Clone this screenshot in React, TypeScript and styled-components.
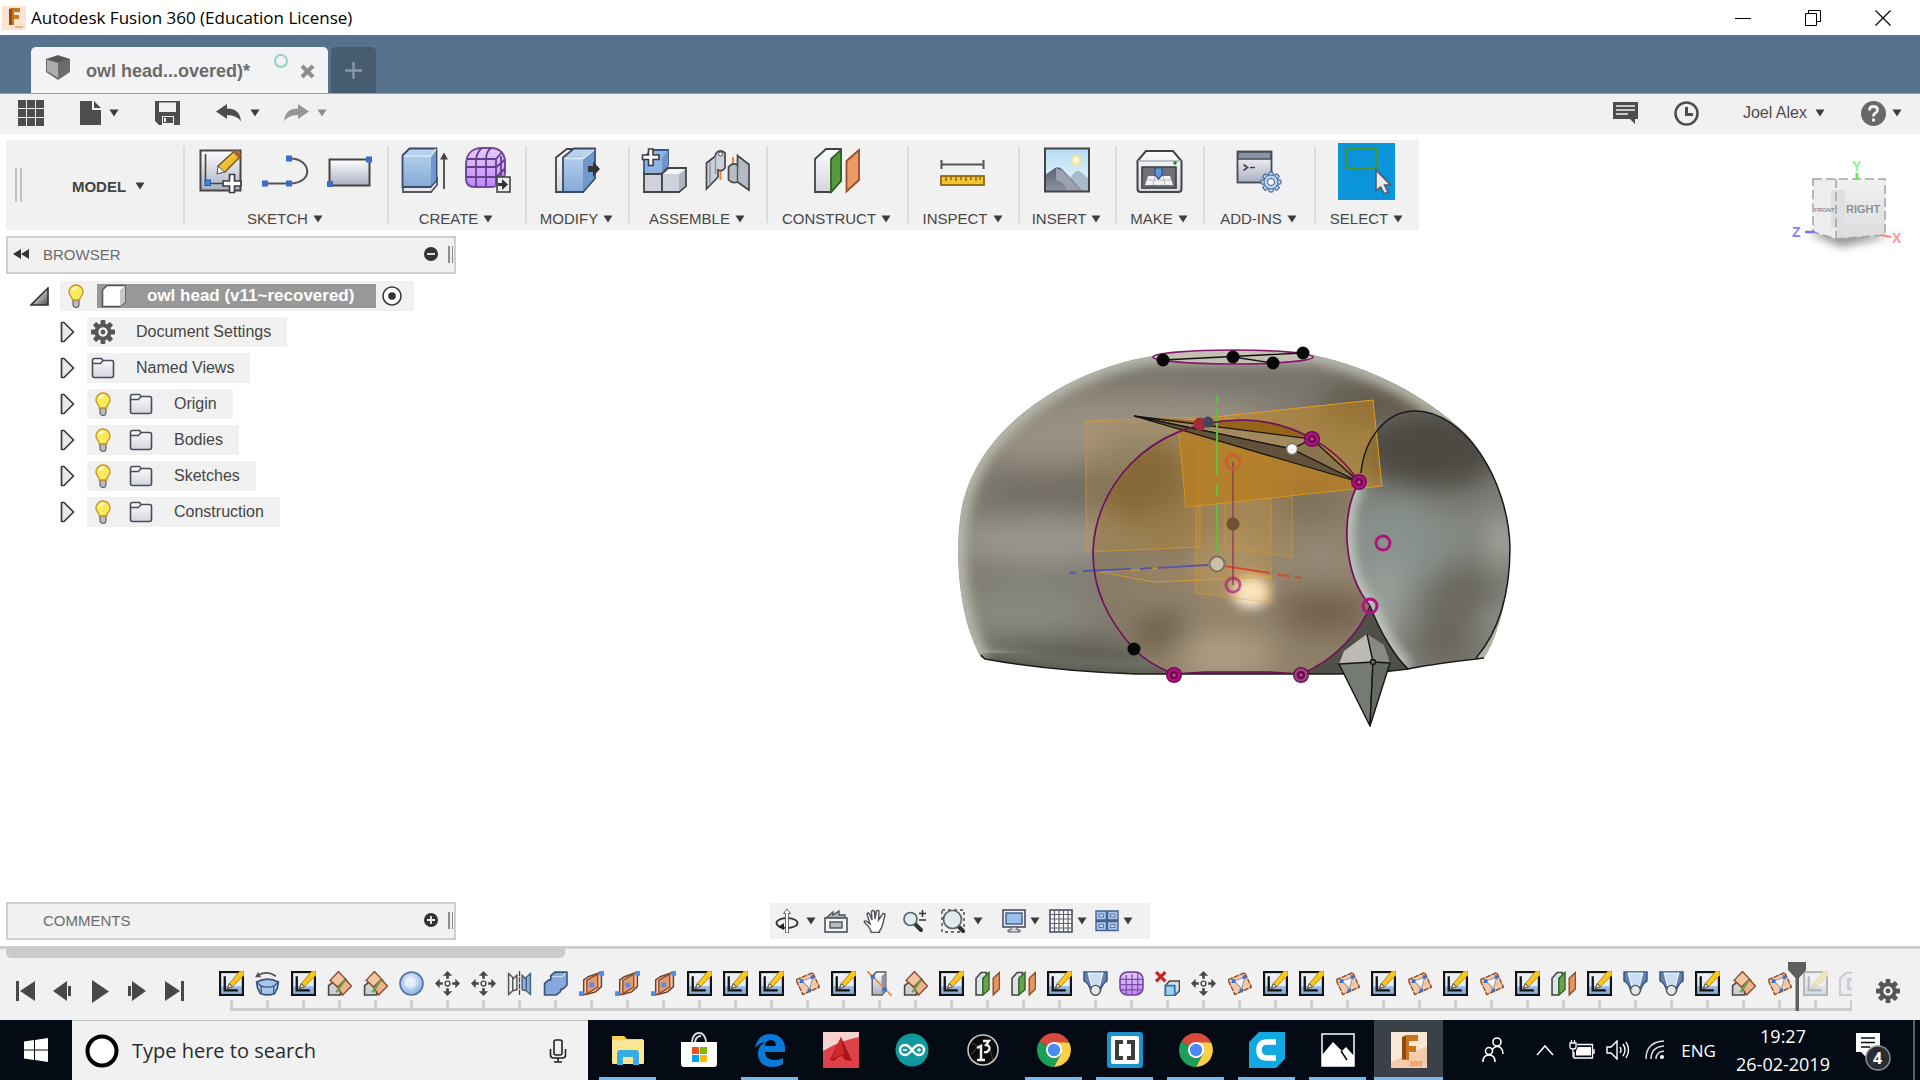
import React from "react";
import styled, { createGlobalStyle } from "styled-components";

const Global = createGlobalStyle`
  *, *::before, *::after { box-sizing: border-box; }
  html, body { margin: 0; padding: 0; }
  body { background: #fff; font-family: "Liberation Sans", Arial, sans-serif; color: #444; }
  button { border: 0; padding: 0; margin: 0; background: none; color: inherit; font: inherit; cursor: pointer; }
  ul { list-style: none; margin: 0; padding: 0; }
  svg { display: block; flex: none; }
`;

const uiFont = `"Open Sans", "Noto Sans", sans-serif`;

const Page = styled.div`
  display: flex;
  flex-direction: column;
  min-height: 100vh;
`;

/* ---------- window title ---------- */
const TitleBar = styled.header`
  display: flex;
  align-items: center;
  height: 35px;
  padding: 0 2px;
  font-family: ${uiFont};
  font-size: 17px;
  color: #000;
`;
const TitleText = styled.span`
  margin-left: 5px;
  flex: 1;
`;
const WindowButton = styled.button`
  width: 70px;
  height: 35px;
  display: grid;
  place-items: center;
`;

const TabStrip = styled.nav`
  display: flex;
  align-items: flex-end;
  gap: 3px;
  height: 59px;
  padding-left: 31px;
  background: #56728c;
  border-bottom: 1px solid #8fa1b2;
`;
const DocTab = styled.div`
  display: flex;
  align-items: center;
  width: 297px;
  height: 46px;
  padding: 2px 13px 0 14px;
  border-radius: 5px 5px 0 0;
  background: #f3f3f5;
  color: #6b6b6b;
  font-size: 18px;
  font-weight: bold;
`;
const PartIcon = styled.svg`
  margin-bottom: 6px;
`;
const TabName = styled.span`
  margin-left: 15px;
  flex: 1;
`;
const SyncRing = styled.span`
  width: 14px;
  height: 14px;
  margin: 0 12px 20px 0;
  border: 2px solid #8fd6c6;
  border-radius: 50%;
`;
const NewTab = styled.button`
  display: grid;
  place-items: center;
  width: 45px;
  height: 46px;
  border-radius: 5px 5px 0 0;
  background: #475b71;
`;

/* ---------- quick access ---------- */
const QuickBar = styled.div`
  display: flex;
  align-items: center;
  justify-content: space-between;
  height: 40px;
  padding: 0 18px 2px;
  background: #f1f1f1;
  color: #4c4c4c;
`;
const QuickGroup = styled.div<{ $gap: number }>`
  display: flex;
  align-items: center;
  gap: ${(p) => p.$gap}px;
`;
const QuickButton = styled.button<{ $faded?: boolean }>`
  display: flex;
  align-items: center;
  gap: 8px;
  font-size: 16px;
  opacity: ${(p) => (p.$faded ? 0.55 : 1)};
`;
const AccountButton = styled(QuickButton)`
  padding-left: 8px;
`;
const HelpButton = styled(QuickButton)`
  gap: 6px;
`;

/* ---------- ribbon ---------- */
const Viewport = styled.main`
  position: relative;
  flex: 1;
  display: flex;
  flex-direction: column;
  padding: 6px 0 6px 6px;
`;
const Ribbon = styled.div`
  display: flex;
  align-self: flex-start;
  height: 90px;
  background: #f1f1f1;
`;
const Grip = styled.span`
  align-self: center;
  width: 7px;
  height: 34px;
  margin-left: 9px;
  border: solid #c4c4c4;
  border-width: 0 2px;
`;
const ModelButton = styled.button`
  width: 161px;
  padding: 2px 0 0 12px;
  display: flex;
  align-items: center;
  justify-content: center;
  gap: 9px;
  font-size: 15px;
  font-weight: bold;
  color: #444;
`;
const RibbonGroup = styled.section<{ $w: number }>`
  display: flex;
  flex-direction: column;
  align-items: center;
  width: ${(p) => p.$w}px;
  padding-top: 3px;
  background: linear-gradient(#dcdcdc, #dcdcdc) 0 6px / 2px 77px no-repeat;
`;
const Tools = styled.div`
  display: flex;
  height: 57px;
`;
const Tool = styled.button<{ $active?: boolean }>`
  display: grid;
  place-items: center;
  width: ${(p) => (p.$active ? 57 : 64)}px;
  padding-bottom: 3px;
  background: ${(p) => (p.$active ? "#0a95db" : "transparent")};
`;
const GroupLabel = styled.button`
  display: flex;
  align-items: center;
  gap: 5px;
  margin-top: 8px;
  font-size: 15px;
  line-height: 22px;
  color: #474747;
`;
const CubeSlot = styled.div`
  position: absolute;
  top: 21px;
  right: 16px;
`;

/* ---------- browser panel ---------- */
const Workspace = styled.div`
  flex: 1;
  display: flex;
  padding-top: 6px;
`;
const SideColumn = styled.aside`
  display: flex;
  flex-direction: column;
  width: 450px;
`;
const PanelHead = styled.div`
  display: flex;
  align-items: center;
  height: 38px;
  padding: 0 1px 2px 5px;
  border: 2px solid #cfcfcf;
  background: #f1f1f1;
  font-size: 15px;
  color: #6c6c6c;
`;
const PanelTitle = styled.span`
  flex: 1;
  margin-left: 14px;
`;
const CollapseButton = styled.button`
  width: 16px;
  height: 12px;
`;
const SlimGrip = styled.span`
  width: 5px;
  height: 17px;
  margin-left: 10px;
  border: solid #8c8c8c;
  border-width: 0 1px 0 2px;
`;
const Tree = styled.ul`
  display: flex;
  flex-direction: column;
  gap: 6px;
  padding: 7px 0 0 24px;
  font-size: 16px;
  color: #454545;
`;
const Row = styled.li<{ $child?: boolean }>`
  display: flex;
  align-items: center;
  gap: ${(p) => (p.$child ? 12 : 11)}px;
  height: 30px;
  padding-left: ${(p) => (p.$child ? 30 : 0)}px;
`;
const RowBody = styled.div`
  display: flex;
  align-items: center;
  height: 30px;
  padding: 0 16px 0 4px;
  background: #f1f1f1;
`;
const RootBody = styled(RowBody)`
  padding: 0 12px 0 7px;
`;
const RowName = styled.span`
  margin-left: 21px;
`;
const RootName = styled.span`
  display: flex;
  align-items: center;
  height: 24px;
  margin: 0 6px 0 12px;
  padding: 0 22px 0 4px;
  gap: 20px;
  background: #989898;
  color: #fff;
  font-size: 17px;
  font-weight: bold;
`;
const BulbSlot = styled.span`
  margin: 0 17px 0 3px;
`;
const Spacer = styled.div`
  flex: 1;
`;
const Scene = styled.div`
  flex: 1;
  display: flex;
  justify-content: center;
  align-items: flex-start;
  padding-top: 94px;
`;
const NavBar = styled.div`
  position: absolute;
  left: 50%;
  bottom: 7px;
  transform: translateX(-50%);
  display: flex;
  align-items: center;
  width: 380px;
  height: 36px;
  padding-left: 5px;
  background: #f1f1f1;
`;
const NavButton = styled.button<{ $w: number; $gap: number }>`
  display: flex;
  align-items: center;
  gap: ${(p) => p.$gap}px;
  width: ${(p) => p.$w}px;
`;

/* ---------- timeline ---------- */
const Timeline = styled.section`
  border-top: 3px solid #cecece;
  background: #f1f1f1;
`;
const ScrollThumb = styled.div`
  width: 559px;
  height: 9px;
  margin-left: 6px;
  border-radius: 0 0 5px 5px;
  background: #cbcbcb;
`;
const TimelineBody = styled.div`
  display: flex;
  height: 62px;
`;
const Playback = styled.div`
  display: flex;
  align-items: center;
  width: 206px;
  margin-left: 7px;
  padding-top: 4px;
`;
const PlayButton = styled.button`
  display: grid;
  place-items: center;
  width: 37px;
`;
const Track = styled.div`
  flex: 1;
  min-width: 0;
  padding-top: 13px;
  overflow: hidden;
`;
const Cells = styled.ul`
  display: flex;
`;
const Cell = styled.li<{ $faded?: boolean }>`
  position: relative;
  flex: none;
  display: flex;
  flex-direction: column;
  align-items: center;
  justify-content: space-between;
  width: 36px;
  height: 37px;
  > svg:first-child { opacity: ${(p) => (p.$faded ? 0.25 : 1)}; }
  &::after { content: ""; width: 3px; height: 8px; background: #cecece; }
`;
const Marker = styled.svg`
  position: absolute;
  top: -9px;
  left: -9px;
  z-index: 1;
`;
const Rail = styled.div`
  height: 3px;
  margin-left: 17px;
  background: #cecece;
`;
const GearButton = styled.button`
  display: grid;
  place-items: center;
  width: 68px;
  padding: 4px 0 0 4px;
`;

/* ---------- taskbar ---------- */
const Taskbar = styled.footer`
  display: flex;
  height: 60px;
  background: #050b14;
  color: #fff;
  font-family: ${uiFont};
`;
const Start = styled.button`
  display: grid;
  place-items: center;
  width: 72px;
`;
const SearchBox = styled.label`
  display: flex;
  align-items: center;
  width: 516px;
  padding: 0 21px 0 13px;
  border-top: 1px solid #bdbdbd;
  background: #f1f1f1;
`;
const SearchInput = styled.input`
  flex: 1;
  min-width: 0;
  margin-left: 13px;
  padding: 0;
  border: 0;
  outline: 0;
  background: none;
  font-family: ${uiFont};
  font-size: 20px;
  &::placeholder { color: #2b2b2b; opacity: 1; }
`;
const Apps = styled.div`
  display: flex;
  gap: 2px;
  margin-left: 5px;
`;
const AppButton = styled.button<{ $run?: boolean; $on?: boolean }>`
  display: grid;
  place-items: center;
  width: 69px;
  background: ${(p) => (p.$on ? "#3b4149" : "transparent")};
  &::after {
    content: "";
    align-self: end;
    grid-area: 1 / 1;
    width: ${(p) => (p.$on ? 69 : 57)}px;
    height: 3px;
    background: ${(p) => (p.$run ? "#76b9ed" : "transparent")};
  }
  > svg { grid-area: 1 / 1; }
`;
const Tray = styled.div`
  display: flex;
  align-items: center;
  margin-left: auto;
  padding-right: 5px;
  font-size: 17px;
`;
const TrayButton = styled.button<{ $w: number }>`
  display: grid;
  place-items: center;
  width: ${(p) => p.$w}px;
  height: 60px;
`;
const Clock = styled.button`
  width: 120px;
  font-size: 18px;
  line-height: 28px;
  text-align: center;
`;
const Desktop = styled.button`
  width: 2px;
  height: 60px;
  margin-left: 10px;
  background: #5a5f66;
`;
const Badge = styled.text`
  font: bold 16px ${uiFont};
`;

/* ---------- shared drawings ---------- */
const Caret = () => (
  <svg width="10" height="8" viewBox="0 0 10 8"><path d="M0.5 0.5h9L5 7.5z" fill="#3d3d3d" /></svg>
);

const Gear = ({ size, fill = "#565656", hole = "#f1f1f1" }: { size: number; fill?: string; hole?: string }) => (
  <svg width={size} height={size} viewBox="-12 -12 24 24">
    {[0, 45, 90, 135, 180, 225, 270, 315].map((a) => (
      <rect key={a} x="-2.4" y="-12" width="4.8" height="6" rx="1" fill={fill} transform={`rotate(${a})`} />
    ))}
    <circle r="6.5" fill="none" stroke={fill} strokeWidth="4" />
    <circle r="4.5" fill={hole} />
    <circle r="2.4" fill={fill} />
  </svg>
);

const Bulb = () => (
  <svg width="18" height="24" viewBox="0 0 18 24">
    <path d="M6 16h6v4.500a3 3 0 0 1-6 0z" fill="#b9bcc4" stroke="#63656d" strokeWidth="1.200" />
    <path d="M9 1a7 7 0 0 1 7 7c0 3.500-3 4.500-3.500 8h-7C5 12.500 2 11.500 2 8a7 7 0 0 1 7-7z" fill="#fdea5a" stroke="#c2952f" strokeWidth="1.400" />
    <path d="M6 6a3.500 3.500 0 0 1 3-2.500" stroke="#fffce0" strokeWidth="2" fill="none" strokeLinecap="round" />
  </svg>
);

const Folder = () => (
  <svg width="24" height="22" viewBox="0 0 24 22">
    <path d="M1.500 3.500q0-2 2-2h7l1.500 2h8.500q2 0 2 2v13q0 2-2 2h-17q-2 0-2-2z" fill="url(#steel)" stroke="#494d58" strokeWidth="1.600" />
    <path d="M1.500 6.500h8l2.500-3" fill="none" stroke="#494d58" strokeWidth="1.400" />
  </svg>
);

const Expander = () => (
  <svg width="15" height="22" viewBox="0 0 15 22"><path d="M1.500 1.500h2.500L13.500 11 4 20.500H1.500z" fill="#e8e8ec" stroke="#3d3d3d" strokeWidth="1.700" strokeLinejoin="round" /></svg>
);

const GradientSheet = styled.svg`
  position: absolute;
`;
const Defs = () => (
  <GradientSheet width="0" height="0" aria-hidden="true">
    <defs>
      <linearGradient id="steel" x1="0" y1="0" x2="0" y2="1"><stop offset="0" stopColor="#fdfdfe" /><stop offset="1" stopColor="#d3d6de" /></linearGradient>
      <linearGradient id="steelDark" x1="0" y1="0" x2="0" y2="1"><stop offset="0" stopColor="#fff" /><stop offset="1" stopColor="#a9b0c0" /></linearGradient>
      <linearGradient id="blue" x1="0" y1="0" x2="0" y2="1"><stop offset="0" stopColor="#bcd6ee" /><stop offset="1" stopColor="#84aad8" /></linearGradient>
      <linearGradient id="violet" x1="0" y1="0" x2="0" y2="1"><stop offset="0" stopColor="#e6cdf6" /><stop offset="1" stopColor="#bf85fb" /></linearGradient>
      <linearGradient id="sky" x1="0" y1="0" x2="0" y2="1"><stop offset="0" stopColor="#b5dcf6" /><stop offset="1" stopColor="#eff9fd" /></linearGradient>
      <linearGradient id="rock" x1="0" y1="0" x2="0" y2="1"><stop offset="0" stopColor="#5a6070" /><stop offset="1" stopColor="#8d94a4" /></linearGradient>
      <linearGradient id="pencil" x1="0" y1="0" x2="1" y2="1"><stop offset="0" stopColor="#ffe45c" /><stop offset="1" stopColor="#d99a0b" /></linearGradient>
      <linearGradient id="corner" x1="0" y1="0" x2="1" y2="1"><stop offset="0.3" stopColor="#e2e2e2" /><stop offset="1" stopColor="#4c4c4c" /></linearGradient>
      <radialGradient id="ball" cx="0.45" cy="0.4" r="0.6"><stop offset="0" stopColor="#fff" /><stop offset="1" stopColor="#86aee0" /></radialGradient>
    </defs>
  </GradientSheet>
);

/* ribbon tool drawings, 48 by 48 */
const toolArt: Record<string, React.ReactNode> = {
  sketch: (<>
    <path d="M3.500 4.500h40v40h-40z" fill="url(#steelDark)" stroke="#474747" strokeWidth="2" />
    <path d="M8.500 8v29.500H36" fill="none" stroke="#444" strokeWidth="1.600" />
    <rect x="8" y="34" width="5.500" height="5.500" fill="#3f86e0" stroke="#2458a8" />
    <path d="M21 20L37.500 5l6 5.500L28 26l-7.500 1.500z" fill="url(#pencil)" stroke="#6b4d16" strokeWidth="1.300" />
    <path d="M21 20l6.500 6-7.500 2z" fill="#fff" stroke="#555" />
    <path d="M36 6.500l5.500 5.500 3-3-5-5.500z" fill="#a4643a" />
    <path d="M32.500 28.500h5v6.500h6.500v5h-6.500v6.500h-5V40H26v-5h6.500z" fill="#fff" stroke="#3f3f3f" strokeWidth="1.700" />
  </>),
  arc: (<>
    <path d="M4 37.500h25c24 0 22-25 0-25" fill="none" stroke="#555" strokeWidth="2" />
    <path d="M1 34.500h6v6H1zM25 34.500h6v6h-6zM25 9.500h6v6h-6z" fill="#396bcb" />
  </>),
  rect: (<>
    <rect x="4.500" y="13.500" width="40" height="26" fill="url(#steelDark)" stroke="#444" strokeWidth="2" />
    <path d="M41 10.500h6v6h-6zM2 35h6v6H2z" fill="#396bcb" />
  </>),
  extrude: (<>
    <path d="M3 40v6h28l6-7v-7z" fill="#e6e8ee" stroke="#55585f" strokeWidth="1.800" />
    <path d="M2.500 9.500l7-7h27v32l-6 6.500h-28z" fill="url(#blue)" stroke="#3a4a68" strokeWidth="1.800" />
    <path d="M31 10l5-7v31l-5 6z" fill="#6e98cf" /><path d="M4 10h27l5-7" fill="none" stroke="#dcecfa" strokeWidth="1.400" />
    <path d="M44 43V12" stroke="#444" strokeWidth="1.800" /><path d="M40 13.500l4-7 4 7z" fill="#444" />
  </>),
  form: (<>
    <path d="M2 19C2 8 8 2 18 2h9c9 0 14 6 14 14v11q0 4-6 11-2 3-9 3H11q-9 0-9-8z" fill="url(#violet)" stroke="#7548a0" strokeWidth="2" />
    <path d="M12 13v28M22 13v28M32 13v26M2.500 21h30l8-7M2.500 31h30l8-8M3 13h29l6-7M12 13q1-7 6-11M22 13q0-7 5-11M37 10v25" fill="none" stroke="#65408c" strokeWidth="1.800" />
    <rect x="33" y="31" width="13" height="15" fill="#eee" stroke="#444" strokeWidth="1.600" />
    <path d="M34 37h4v-4l6 5.500-6 5.500v-4h-4z" fill="#333" />
  </>),
  presspull: (<>
    <path d="M3 11.500L14 3h8v43H3z" fill="url(#steel)" stroke="#444" strokeWidth="1.800" />
    <path d="M10 11.500L21 2.500h21v30L30 46H10z" fill="url(#blue)" stroke="#3a4a68" strokeWidth="1.800" />
    <path d="M30 13L41 4v28L30 44z" fill="#6e98cf" /><path d="M11 12.500h19L41 4" fill="none" stroke="#dcecfa" strokeWidth="1.400" />
    <path d="M35 20h5v-4.500l7 7.500-7 7.500V26h-5z" fill="#333" />
  </>),
  component: (<>
    <path d="M3 28V12l7-8h17v15l-7 9z" fill="#8fb4e2" stroke="#34548c" strokeWidth="1.800" />
    <path d="M21 12l6-8v15l-6 8z" fill="#6d96cf" />
    <path d="M3 28h18v18H3z" fill="#cfd2da" stroke="#444" strokeWidth="1.800" />
    <path d="M21 28l6-6h18v18l-7 6H21z" fill="#cfd2da" stroke="#444" strokeWidth="1.800" />
    <path d="M22 28h16l6-5H28z" fill="#f4f5f7" /><path d="M38 29l6-5v16l-6 5z" fill="#adb3c0" />
    <path d="M7.500 3h4.500v6h6v4.500h-6v6H7.500v-6h-6V9h6z" fill="#fff" stroke="#3b3b3b" strokeWidth="1.600" />
  </>),
  joint: (<>
    <path d="M15.500 20v14M28 11v12" stroke="#f38433" strokeWidth="2" />
    <path d="M1.500 17l9-7v-2q4-6 9.500-1v15q-3 4-7 2v7L1.500 43z" fill="#cbd0d9" stroke="#474747" strokeWidth="1.700" />
    <path d="M10.500 10v18M5 16v22" stroke="#8a909c" strokeWidth="1.400" /><circle cx="15.500" cy="8" r="2" fill="#fff" stroke="#444" />
    <path d="M23.500 21q4-5 9-2V9.500l11.500 9V44l-11.500-8q-5 2-9-2z" fill="#b4bac6" stroke="#474747" strokeWidth="1.700" />
    <path d="M32.500 18v18" stroke="#555" strokeWidth="1.400" />
  </>),
  construct: (<>
    <path d="M2 13L13 3h15v32L18 46H2z" fill="url(#steel)" stroke="#444" strokeWidth="1.800" />
    <path d="M18 13L28 4v31L18 46z" fill="#5a983f" stroke="#2f6321" strokeWidth="1.800" />
    <path d="M33.500 15L46 4v30L33.500 45.500z" fill="#eb9a68" stroke="#9a4e25" strokeWidth="1.800" />
  </>),
  inspect: (<>
    <path d="M2 18.500h42M2.500 14v9M44.500 14v9" stroke="#555" strokeWidth="2" />
    <rect x="2" y="30" width="43" height="9" fill="#f3c62d" stroke="#8f6613" strokeWidth="1.800" />
    <path d="M7 31v4M12 31v3M17 31v4M22 31v3M27 31v4M32 31v3M37 31v4M41 31v3" stroke="#7a5a12" strokeWidth="1.300" />
  </>),
  insert: (<>
    <rect x="2" y="2.500" width="44" height="43" fill="url(#sky)" />
    <circle cx="33" cy="14" r="4" fill="#fff" stroke="#ffe48a" strokeWidth="2.500" />
    <path d="M22 37l10-11q3-3 7 1l7 6v12H28z" fill="#a6bcca" />
    <path d="M2 29l10-7q4-2 8 2l20 21.500H2z" fill="url(#rock)" /><path d="M13 22l7 3 18 20H24q-2-9-11-11z" fill="#9ba1b0" />
    <rect x="2" y="2.500" width="44" height="43" fill="none" stroke="#444" strokeWidth="2" />
  </>),
  make: (<>
    <path d="M2.500 15L11 5h27l8.500 10v28q0 3-3 3h-38q-3 0-3-3z" fill="url(#steel)" stroke="#444" strokeWidth="2" />
    <path d="M3 15h43" stroke="#a9adb5" strokeWidth="1.400" /><circle cx="40" cy="17" r="1.800" fill="#0c8f1f" />
    <path d="M7 21h34v21H7z" fill="#6e7078" stroke="#3d3d3d" strokeWidth="1.600" />
    <path d="M13 30h22l3 9H10z" fill="#f2f2f4" /><path d="M12 34h24M20 30l-2 9M28 30l2 9" stroke="#bbb" />
    <path d="M20 22h7v7l-3.500 4-3.500-4z" fill="#6196db" stroke="#27528f" strokeWidth="1.200" />
  </>),
  addins: (<>
    <rect x="2.500" y="5.500" width="34" height="31" fill="url(#steelDark)" stroke="#474a55" strokeWidth="1.800" />
    <path d="M3 6h33v7H3z" fill="#8b94a4" stroke="#474a55" strokeWidth="1.400" />
    <path d="M8.500 18.500l4 3-4 3M15 21.500h5" fill="none" stroke="#444" strokeWidth="1.600" />
    <g transform="translate(36 36)">
      {[0, 45, 90, 135, 180, 225, 270, 315].map((a) => (<rect key={a} x="-2.200" y="-10" width="4.400" height="6" rx="1" fill="#b9d2f0" stroke="#34588e" transform={`rotate(${a})`} />))}
      <circle r="7" fill="#b9d2f0" stroke="#4a6c9e" /><circle r="3.500" fill="#fff" stroke="#34588e" />
    </g>
  </>),
  select: (<>
    <rect x="3" y="2" width="30" height="21" fill="none" stroke="#47932f" strokeWidth="2" />
    <path d="M33 24v21l4.500-4 4 7 3.500-2-3.500-7h6z" fill="#e9ebef" stroke="#555b66" strokeWidth="1.600" />
  </>),
};
const ToolIcon = ({ name }: { name: string }) => (
  <svg width="48" height="48" viewBox="0 0 48 48">{toolArt[name]}</svg>
);

/* timeline feature drawings, 24 by 24 */
const featureArt: Record<string, React.ReactNode> = {
  sketch: (<>
    <rect x="1" y="1" width="22" height="22" fill="url(#blue)" stroke="#111" strokeWidth="2" />
    <rect x="2.500" y="2.500" width="19" height="12" fill="#fff" opacity="0.700" />
    <path d="M5.500 5v13.500H18" fill="none" stroke="#111" strokeWidth="2.200" />
    <path d="M8 17l2-5L20 0h4v4L13 15z" fill="#fbc81a" stroke="#a8790d" strokeWidth="0.800" /><path d="M8 17l2-5 3 3z" fill="#f3d9b6" stroke="#333" strokeWidth="0.800" />
  </>),
  revolve: (<>
    <path d="M3 4q9-5 17 1" fill="none" stroke="#555" strokeWidth="1.600" /><path d="M0 6l3-5 3 5z" fill="#555" />
    <path d="M1.500 10.500Q12 5 22.500 10.500l-1 6q-1.500 2-2.500 5-7 3-14 0-1-3-2.500-5z" fill="#a9c6e8" stroke="#39547f" strokeWidth="1.600" />
    <path d="M1.500 10.500L6 14.500q6 2 12 0l4.500-4M6 14.500v7M18 14.500v7" fill="none" stroke="#39547f" strokeWidth="1.200" />
  </>),
  split: (<>
    <path d="M1.500 14L6 10.500h7V23H1.500z" fill="#cdd0d6" stroke="#444" strokeWidth="1.500" />
    <path d="M3 9l8-8.500 8 8.500-8 7z" fill="#f3c3a2" stroke="#8d5130" strokeWidth="1.400" />
    <path d="M10 15.500L17.500 8l6 6.500L15 23z" fill="#eeb28d" stroke="#8d5130" strokeWidth="1.400" />
    <path d="M9 20.500L17 9" stroke="#62a33f" strokeWidth="2" />
  </>),
  sphere: (<><circle cx="12" cy="12" r="11" fill="url(#ball)" stroke="#54759f" strokeWidth="1.600" /><circle cx="11" cy="11" r="5.500" fill="#e7f1fc" opacity="0.700" /></>),
  move: (<>
    {[0, 90, 180, 270].map((a) => (<path key={a} d="M10.700 7.500V4.500H7.500L12 0l4.500 4.500h-3.200v3z" fill="#484848" transform={`rotate(${a} 12 12)`} />))}
    <circle cx="12" cy="12" r="2.300" fill="#fff" stroke="#484848" strokeWidth="1.400" />
  </>),
  mirror: (<>
    <path d="M1.500 2.500l4 3.500v13l-4 3.500zM5.500 8L9.500 4v14l-4 1z" fill="#eceef1" stroke="#555" strokeWidth="1.400" />
    <path d="M22.500 2.500l-4 3.500v13l4 3.500zM18.500 8l-4-4v14l4 1z" fill="#8db1df" stroke="#47617f" strokeWidth="1.400" />
    <path d="M12 0v24" stroke="#444" strokeWidth="1.200" strokeDasharray="5 1" />
  </>),
  combine: (<><path d="M7.500 4.500l4-3.500h11.500v12.500l-4 4h-2v2L13 23H1.500V12l4-3.500h2z" fill="#84a9da" stroke="#39547f" strokeWidth="1.600" strokeLinejoin="round" /><path d="M9 5.500h9.500L22 2" fill="none" stroke="#c5daf2" strokeWidth="1.200" /></>),
  midplane: (<>
    <path d="M4.500 8.500L9 5.500 19 2h2.500v13L16 20l-9 2.500H4.500z" fill="#f5cdb2" stroke="#6f4029" strokeWidth="1.400" /><path d="M7.500 9L18 3v12.500L7.500 22z" fill="#e79a6d" stroke="#8d5130" strokeWidth="1.400" />
    <path d="M0 19.500h4.500V24H0zM19.500 0H24v4.500h-4.500zM10 11h4.500v4.500H10z" fill="#4d8df5" />
  </>),
  pplane: (<>
    <path d="M1 8.500L17 1.500l6.500 14L7.500 22.500z" fill="#f5c8aa" /><path d="M1 8.500L17 1.500l6.500 14L7.500 22.500z" fill="none" stroke="#8d5130" strokeWidth="1.400" strokeDasharray="5 1" />
    <path d="M6.500 9.500L17 6l-3 11z" fill="#f3f4f8" stroke="#999" />
    <path d="M4.500 8h3.500v3.500H4.500zM15 4h3.500v3.500H15zM12 17h3.500v3.500H12z" fill="#3c6fd6" />
  </>),
  axis: (<>
    <path d="M5 5.500L9 1h9v18l-3.500 4H5z" fill="url(#steelDark)" stroke="#555" strokeWidth="1.400" /><path d="M14 5l4-4v18l-4 4z" fill="#8e96a5" />
    <path d="M0 0l24 24" stroke="#f38a35" strokeWidth="1.800" /><path d="M3.500 3.500h4v4h-4zM15 15.500h4v4h-4z" fill="#3c6fd6" />
  </>),
  offset: (<>
    <path d="M1 7l5-5.500h5V19l-4 4H1z" fill="#dfe2e7" stroke="#444" strokeWidth="1.500" />
    <path d="M7.500 7l6-5.500V18l-6 5z" fill="#6ba04f" stroke="#37642a" strokeWidth="1.400" /><path d="M17.500 7l6-5.500V17l-6 6z" fill="#e9935f" stroke="#8d5130" strokeWidth="1.400" />
  </>),
  loft: (<>
    <path d="M1 1h22v8.500q-5 3-6.500 10h-9Q6 12 1 9.500z" fill="#5f80b4" stroke="#39547f" strokeWidth="1.500" /><path d="M5 2h14l-4 15H9z" fill="#c9dcf3" stroke="#eef4fb" strokeWidth="1.200" />
    <circle cx="12" cy="18.500" r="4.700" fill="#e4e7ec" stroke="#555" strokeWidth="1.400" />
  </>),
  form: (<><rect x="1" y="1" width="22" height="22" rx="7" fill="url(#violet)" stroke="#7548a0" strokeWidth="1.600" /><path d="M7 4v18M12.500 3v20M18 2v20M2 8h20M1.500 13h21M2 18h20" stroke="#7a4ea8" strokeWidth="1.200" /></>),
  remove: (<>
    <path d="M1 1l9 9M10 1l-9 9" stroke="#c92424" strokeWidth="3" />
    <path d="M10 14l4-4.500h9.500V19L19 23.500h-9z" fill="#d7dadf" stroke="#444" strokeWidth="1.400" /><path d="M10 14h9v9.500h-9z" fill="#9fd0f4" stroke="#2373b6" strokeWidth="1.600" />
  </>),
  cut: (<><path d="M1 7l6-5.500h17V23H1z" fill="#dfe2e7" stroke="#555" strokeWidth="1.800" /><path d="M24 8H9v9h15" fill="none" stroke="#3c6fb0" strokeWidth="2.500" /></>),
};

const features = (
  "sketch revolve sketch split split sphere move move mirror combine midplane midplane midplane sketch sketch sketch pplane sketch axis split " +
  "sketch offset offset sketch loft form remove move pplane sketch sketch pplane sketch pplane sketch pplane sketch offset sketch loft loft sketch split pplane sketch cut"
).split(" ");
const markerAt = 44;

/* ---------- the modelled body ---------- */
const bodyPath = "M981 657C960 620 954 560 961 512C967 478 985 447 1015 420C1050 389 1100 364 1153 356L1313 355C1370 367 1425 395 1465 433C1495 465 1510 510 1510 550C1509 600 1496 640 1484 658C1460 661 1430 664 1408 669Q1370 674 1335 674L1136 674Q1050 671 985 659Z";
const leftEye = "M1174 674C1155 666 1145 660 1134 649C1108 620 1093 590 1093 553C1094 490 1145 421 1241 420C1290 420 1335 445 1359 482C1349 500 1346 520 1347 540C1349 570 1356 588 1370 606C1360 632 1335 660 1301 674L1270 672L1205 672Z";
const rightEye = "M1415 411C1385 411 1364 440 1361 473L1359 482C1349 500 1346 520 1347 540C1349 570 1356 588 1370 606C1380 632 1395 657 1408 669L1430 664L1476 658C1500 630 1510 590 1510 547C1508 480 1465 411 1415 411Z";

const Target = ({ x, y, color = "#b0127f" }: { x: number; y: number; color?: string }) => (
  <g><circle cx={x} cy={y} r="8" fill="#6d0a50" /><circle cx={x} cy={y} r="5.500" fill="none" stroke={color} strokeWidth="2.500" /><circle cx={x} cy={y} r="1.500" fill="#e34bb3" /></g>
);
const Ring = ({ x, y, o = 1 }: { x: number; y: number; o?: number }) => (
  <circle cx={x} cy={y} r="7" fill="none" stroke="#b0127f" strokeWidth="3" opacity={o} />
);
const Soft = ({ x, y, rx, ry, c }: { x: number; y: number; rx: number; ry: number; c: string }) => (
  <ellipse cx={x} cy={y} rx={rx} ry={ry} fill={c} />
);

const OwlModel = () => (
  <svg width="640" height="410" viewBox="868 330 640 410" overflow="visible" role="img" aria-label="Owl head model">
    <defs>
      <clipPath id="cBody"><path d={bodyPath} /></clipPath>
      <clipPath id="cLeft"><path d={leftEye} /></clipPath>
      <clipPath id="cRight"><path d={rightEye} /></clipPath>
      <filter id="soft" x="-50%" y="-50%" width="200%" height="200%"><feGaussianBlur stdDeviation="14" /></filter>
      <filter id="soft6" x="-50%" y="-50%" width="200%" height="200%"><feGaussianBlur stdDeviation="6" /></filter>
    </defs>
    <g clipPath="url(#cBody)">
      <rect x="940" y="340" width="590" height="350" fill="#827c71" />
      <g filter="url(#soft)">
        <Soft x={1240} y={380} rx={150} ry={12} c="#75726a" />
        <Soft x={1150} y={415} rx={120} ry={20} c="#9a9184" />
        <Soft x={1050} y={440} rx={60} ry={26} c="#9a9183" />
        <Soft x={1080} y={490} rx={80} ry={22} c="#726d63" />
        <Soft x={1010} y={497} rx={26} ry={18} c="#706e67" />
        <Soft x={1040} y={540} rx={90} ry={20} c="#9c9992" />
        <Soft x={1040} y={577} rx={60} ry={12} c="#808076" />
        <Soft x={1020} y={612} rx={70} ry={18} c="#888c82" />
        <Soft x={1060} y={662} rx={100} ry={22} c="#5b5b51" />
        <Soft x={1375} y={405} rx={60} ry={24} c="#625b4d" />
      </g>
      <path d={bodyPath} fill="none" stroke="#bcc0b4" strokeWidth="14" filter="url(#soft6)" />
      <path d="M985 660Q1060 672 1140 674H1340" fill="none" stroke="#5b5b51" strokeWidth="22" filter="url(#soft6)" />
      <path d="M1153 358H1313" stroke="#7c786f" strokeWidth="22" filter="url(#soft6)" />
      <path d="M1370 606L1301 674H1412Z" fill="#504f48" />
    </g>
    <g clipPath="url(#cRight)">
      <rect x="1340" y="400" width="180" height="290" fill="#7a7b74" />
      <g filter="url(#soft)">
        <Soft x={1430} y={448} rx={75} ry={42} c="#4d4a43" />
        <Soft x={1395} y={545} rx={54} ry={48} c="#88918c" />
        <Soft x={1460} y={535} rx={40} ry={18} c="#858b86" />
        <Soft x={1506} y={540} rx={12} ry={30} c="#b0ada6" />
        <Soft x={1460} y={592} rx={36} ry={24} c="#6a675c" />
        <Soft x={1385} y={600} rx={20} ry={40} c="#9ca29c" />
        <Soft x={1445} y={640} rx={26} ry={26} c="#69655a" />
        <Soft x={1504} y={622} rx={12} ry={20} c="#9f9c94" />
      </g>
      <path d="M1359 482C1349 500 1346 520 1347 540C1349 570 1356 588 1370 606C1380 632 1395 657 1408 669" fill="none" stroke="#ccd3ce" strokeWidth="12" filter="url(#soft6)" />
    </g>
    <g clipPath="url(#cLeft)">
      <rect x="1090" y="410" width="290" height="270" fill="#8f8069" />
      <g filter="url(#soft)">
        <Soft x={1140} y={480} rx={50} ry={44} c="#765f3c" />
        <Soft x={1110} y={590} rx={22} ry={50} c="#857b66" />
        <Soft x={1180} y={530} rx={50} ry={22} c="#8c7652" />
        <Soft x={1160} y={632} rx={30} ry={20} c="#6e604c" />
        <Soft x={1230} y={565} rx={40} ry={34} c="#a48f70" />
        <Soft x={1310} y={500} rx={40} ry={20} c="#7d7059" />
        <Soft x={1320} y={560} rx={40} ry={14} c="#958b7c" />
        <Soft x={1325} y={612} rx={45} ry={22} c="#72614d" />
        <Soft x={1225} y={655} rx={50} ry={24} c="#ad9c83" />
      </g>
      <ellipse cx="1251" cy="592" rx="19" ry="16" fill="#fff0d8" filter="url(#soft6)" />
    </g>

    {/* construction planes */}
    <g fill="#e7a020" stroke="#efa11b" strokeWidth="1">
      <path d="M1086 421L1200 417V547L1086 552Z" fillOpacity="0.160" strokeOpacity="0.550" />
      <path d="M1196 444L1271 453V603L1196 593Z" fillOpacity="0.150" strokeOpacity="0.450" />
      <path d="M1225 417L1292 430V557L1225 547Z" fillOpacity="0.120" strokeOpacity="0.450" />
      <path d="M1100 572L1154 582L1271 577L1216 565Z" fillOpacity="0.080" strokeOpacity="0.700" />
      <path d="M1178 421L1373 400L1382 486L1186 507Z" fill="#c98a1c" fillOpacity="0.500" strokeOpacity="0.900" />
      <g clipPath="url(#cLeft)"><path d="M1178 421L1373 400L1382 486L1186 507Z" fill="#b07820" fillOpacity="0.500" stroke="none" /></g>
    </g>

    {/* beak */}
    <path d="M1208 422Q1270 412 1312 439L1134 416Z" fill="#96651a" />
    <path d="M1134 416L1312 439L1292 449Z" fill="#a28a5c" stroke="#1a1712" strokeWidth="1.300" />
    <path d="M1134 416L1292 449L1359 482Z" fill="#63523a" stroke="#1a1712" strokeWidth="1.300" />
    <path d="M1312 439L1359 482L1292 449Z" fill="#8a764e" stroke="#1a1712" strokeWidth="1.300" />

    {/* axes */}
    <path d="M1217 395v8M1217 408v68M1217 484v12M1217 504v50" stroke="#5ac23a" strokeWidth="2" fill="none" />
    <path d="M1070 573l6-0.500M1083 571l48-2M1140 569l12-1M1158 568l50-3" stroke="#5557ab" strokeWidth="2" fill="none" />
    <path d="M1224 566l46 7M1278 575l12 1M1295 577l7 1" stroke="#d4483b" strokeWidth="2" fill="none" />
    <circle cx="1217" cy="564" r="7.500" fill="#cbbfa8" stroke="#7d7260" strokeWidth="2" />
    <path d="M1233 462V585" stroke="#8c3a62" strokeWidth="1.400" />
    <circle cx="1233" cy="524" r="6.500" fill="#6a5232" />
    <circle cx="1233" cy="462" r="7" fill="none" stroke="#cf5a34" strokeWidth="3" opacity="0.800" />
    <Ring x={1233} y={585} o={0.65} />

    {/* edges */}
    <g fill="none" stroke="#1a1a1a" strokeWidth="1.500">
      <path d="M981 655L985 659Q1050 671 1136 674H1335Q1370 674 1408 669C1430 664 1460 661 1484 658" />
      <path d="M1361 473C1364 440 1385 411 1415 411C1465 411 1508 480 1510 547C1510 590 1500 630 1476 658M1370 606C1380 632 1395 657 1408 669" />
    </g>
    <path d={leftEye} fill="none" stroke="#6f105c" strokeWidth="1.700" />
    <ellipse cx="1233" cy="357" rx="80" ry="7" fill="#c4c1b4" stroke="#85186f" strokeWidth="1.700" />
    <path d="M1163 360L1303 353M1233 357L1273 363" stroke="#111" strokeWidth="1.400" />
    {[[1163, 360], [1233, 357], [1273, 363], [1303, 353], [1134, 649]].map(([x, y]) => (<circle key={x} cx={x} cy={y} r="6.500" fill="#080808" />))}
    <Target x={1359} y={482} /><Target x={1312} y={439} /><Target x={1174} y={675} /><Target x={1301} y={675} color="#96477e" />
    <circle cx="1200" cy="424" r="6.500" fill="#a32c38" /><circle cx="1208" cy="422" r="5.500" fill="#454458" />
    <circle cx="1292" cy="449" r="5.500" fill="#f5f5f5" stroke="#777" strokeWidth="1.400" />
    <Ring x={1383} y={543} /><Ring x={1370} y={606} />

    {/* hanging gem */}
    <g stroke="#151515" strokeWidth="1.400" strokeLinejoin="round">
      <path d="M1367 634L1344 651L1339 664L1373 662Z" fill="#bdbab4" stroke="none" />
      <path d="M1367 634L1384 645L1390 663L1373 662Z" fill="#8a8a84" stroke="none" />
      <path d="M1339 664L1373 662L1370 726Z" fill="#757a73" />
      <path d="M1390 663L1373 662L1370 726Z" fill="#656a63" />
      <path d="M1367 634L1373 662" fill="none" /><circle cx="1373" cy="662" r="2.500" fill="#6b6b66" />
    </g>
  </svg>
);

const ViewCube = () => (
  <svg width="112" height="102" viewBox="0 -4 112 102" fontFamily="Liberation Sans, Arial, sans-serif" fontWeight="bold">
    <defs>
      <filter id="cubeShadow" x="-20%" y="-60%" width="140%" height="220%"><feGaussianBlur stdDeviation="4" /></filter>
      <linearGradient id="cubeFace" x1="0" y1="0" x2="0" y2="1"><stop offset="0" stopColor="#f1f1f2" /><stop offset="1" stopColor="#dcdcde" /></linearGradient>
    </defs>
    <path d="M16 74l33 14 48-10-40-8z" fill="#9a9a9a" filter="url(#cubeShadow)" />
    <path d="M21 20h23v60l-23-7z" fill="#ededee" /><path d="M44 20h49v56l-49 4z" fill="url(#cubeFace)" />
    <path d="M39 31h14v38H39z" fill="#dcdfe3" />
    <path d="M21 20h72v56l-49 4-23-7zM44 20v60" fill="none" stroke="#a2a2a2" strokeWidth="1.500" strokeDasharray="9 4" />
    <path d="M65 14v6" stroke="#5df05d" strokeWidth="3" /><path d="M13 73h10" stroke="#7676f3" strokeWidth="2.500" /><path d="M89 76l10 2" stroke="#ff8585" strokeWidth="2" />
    <text x="60" y="12" fontSize="14" fill="#8df58d">Y</text>
    <text x="0" y="78" fontSize="14" fill="#8484f4">Z</text>
    <text x="100" y="84" fontSize="14" fill="#ff9797">X</text>
    <text x="54" y="54" fontSize="11" fill="#8d9096">RIGHT</text>
    <text x="22" y="53" fontSize="6" fill="#8d9096">FRONT</text>
  </svg>
);

const Chrome = () => (
  <svg width="34" height="34" viewBox="0 0 34 34">
    <path d="M17 17L2.300 8.500A17 17 0 0 1 31.700 8.500z" fill="#da4a3c" /><path d="M17 0.500a16.500 16.500 0 0 1 14.500 8.500H17z" fill="#da4a3c" />
    <path d="M17 17L2.300 8.500A17 17 0 0 0 17 34l7-13z" fill="#1c9f5a" /><path d="M17 9.500h15.200A17 17 0 0 1 17 34l7-13z" fill="#fdd04a" />
    <circle cx="17" cy="17" r="8" fill="#fff" /><circle cx="17" cy="17" r="6.200" fill="#4a8af4" />
  </svg>
);

type AppInfo = { name: string; run?: boolean; on?: boolean; icon: React.ReactNode };
const apps: AppInfo[] = [
  { name: "File Explorer", run: true, icon: (
    <svg width="34" height="32" viewBox="0 0 34 32"><path d="M1 2h12l3 3h16v23H1z" fill="#f7cf4d" /><path d="M1 6h32v23q0 1-1 1H2q-1 0-1-1z" fill="#fee695" /><path d="M6 31V19q0-3 3-3h16q3 0 3 3v12h-6v-8H12v8z" fill="#35ace4" /></svg>) },
  { name: "Store", icon: (
    <svg width="36" height="36" viewBox="0 0 36 36"><path d="M11 10Q12 1 18 1t7 9M14 10q1-6 6-6" fill="none" stroke="#ddd" strokeWidth="1.800" /><path d="M0 10h36v22q0 3-3 3H3q-3 0-3-3z" fill="#fff" /><path d="M11 15h7v7h-7z" fill="#f25022" /><path d="M19 15h7v7h-7z" fill="#7fba00" /><path d="M11 23h7v7h-7z" fill="#00a4ef" /><path d="M19 23h7v7h-7z" fill="#ffb900" /></svg>) },
  { name: "Edge", run: true, icon: (
    <svg width="32" height="34" viewBox="0 0 32 34"><path d="M1 15C3 5 9 1 16 1c9 0 15 6 15 14v4H11c0 6 5 8 10 8 3 0 6-1 8-2v6c-3 2-7 3-11 3C9 34 4 28 4 21c0-6 3-10 8-12-5 0-9 3-11 6zm10-2h11c0-4-2-6-5-6s-6 2-6 6z" fill="#0a7ad9" /></svg>) },
  { name: "AutoCAD", icon: (
    <svg width="36" height="36" viewBox="0 0 36 36"><path d="M0 0h36v36H0z" fill="#df4148" /><path d="M0 0h36v5Q16 9 0 19z" fill="#f6d3cf" /><path d="M18 5l11 24-7-1-3-4-4 1-4 4-4-1z" fill="#a5151a" /><path d="M18 5l3 17-10 4-3 2z" fill="#cf2a2a" /></svg>) },
  { name: "Arduino", icon: (
    <svg width="34" height="34" viewBox="0 0 34 34"><circle cx="17" cy="17" r="16.500" fill="#12989c" /><path d="M17 17c-3-4-5-5-7-5a5 5 0 0 0 0 10c2 0 4-1 7-5s5-5 7-5a5 5 0 0 1 0 10c-2 0-4-1-7-5z" fill="none" stroke="#fff" strokeWidth="2.400" /><path d="M8 17h4M22 17h4M24 15v4" stroke="#fff" strokeWidth="1.300" /></svg>) },
  { name: "Processing", icon: (
    <svg width="32" height="32" viewBox="0 0 32 32"><circle cx="16" cy="16" r="15" fill="#0a0a0a" stroke="#ccc" strokeWidth="1.500" /><path d="M5 9l8 4M4 21l9-11M20 6l6 20" stroke="#4b4a35" /><path d="M10 14l4-2v14M10 26h8" fill="none" stroke="#eee" strokeWidth="2.500" /><path d="M16 7h6l-3 4q5 1 3 5-2 3-5 2" fill="none" stroke="#eee" strokeWidth="2.300" /></svg>) },
  { name: "Chrome", run: true, icon: <Chrome /> },
  { name: "Brackets", run: true, icon: (
    <svg width="36" height="36" viewBox="0 0 36 36"><rect width="36" height="36" rx="3" fill="#1c93cf" /><rect x="4" y="4" width="28" height="28" rx="2" fill="#fff" /><path d="M16 8H8v20h8v-4h-4V12h4zM20 8h8v20h-8v-4h4V12h-4z" fill="#3c3c3c" /></svg>) },
  { name: "Chrome second window", run: true, icon: <Chrome /> },
  { name: "Cura", run: true, icon: (
    <svg width="36" height="36" viewBox="0 0 36 36"><path d="M10 0h26v27l-9 9H0V10z" fill="#12a9e3" /><path d="M27 10H18q-8 0-8 8t8 8h9" fill="none" stroke="#fff" strokeWidth="5.500" /></svg>) },
  { name: "Photos", run: true, icon: (
    <svg width="34" height="34" viewBox="0 0 34 34"><rect x="1" y="1" width="32" height="32" fill="#050b14" stroke="#fff" strokeWidth="1.500" /><path d="M1 22L12 9l9 9 4-4 8 9v10H1z" fill="#fff" /><path d="M20 18l6 9" stroke="#050b14" strokeWidth="1.500" /></svg>) },
  { name: "Fusion 360", run: true, on: true, icon: (
    <svg width="36" height="36" viewBox="0 0 36 36"><path d="M0 0h36v36H0z" fill="#fbe7d5" /><path d="M0 30L36 14v22H0z" fill="#f3bf93" opacity="0.700" /><path d="M11 5l4-2h12v6H18v5h7v6h-7v8h-7z" fill="#c9751f" /><path d="M11 5l4-1v23h-4z" fill="#8c4c12" /><text x="18" y="34" fontSize="8" fontFamily="Liberation Sans, sans-serif" fill="#e8751a">360</text></svg>) },
];

const groups: { label: string; w: number; tools: string[] }[] = [
  { label: "SKETCH", w: 204, tools: ["sketch", "arc", "rect"] },
  { label: "CREATE", w: 138, tools: ["extrude", "form"] },
  { label: "MODIFY", w: 103, tools: ["presspull"] },
  { label: "ASSEMBLE", w: 138, tools: ["component", "joint"] },
  { label: "CONSTRUCT", w: 141, tools: ["construct"] },
  { label: "INSPECT", w: 111, tools: ["inspect"] },
  { label: "INSERT", w: 97, tools: ["insert"] },
  { label: "MAKE", w: 88, tools: ["make"] },
  { label: "ADD-INS", w: 111, tools: ["addins"] },
  { label: "SELECT", w: 105, tools: ["select"] },
];

const nodes: { name: string; kind: "gear" | "folder"; bulb?: boolean }[] = [
  { name: "Document Settings", kind: "gear" },
  { name: "Named Views", kind: "folder" },
  { name: "Origin", kind: "folder", bulb: true },
  { name: "Bodies", kind: "folder", bulb: true },
  { name: "Sketches", kind: "folder", bulb: true },
  { name: "Construction", kind: "folder", bulb: true },
];

const playback: [string, string][] = [
  ["To start", "M1 1h3v20H1zM20 1v20L5 11z"],
  ["Step back", "M16 6h3v10h-3zM15 1v20L1 11z"],
  ["Play", "M3 0v23l17-11.500z"],
  ["Step forward", "M2 6h3v10H2zM6 1v20l14-10z"],
  ["To end", "M18 1h3v20h-3zM2 1v20l15-10z"],
];

const navTools: { name: string; w: number; gap?: number; art: React.ReactNode }[] = [
  { name: "Orbit", w: 49, gap: 7, art: (<><ellipse cx="12" cy="14" rx="10.500" ry="5" fill="none" stroke="#333" strokeWidth="1.800" /><path d="M12 0l3.500 4.500H13.500V24h-3V4.500h-2z" fill="#fff" stroke="#666" /><path d="M3 18l6-4v7z" fill="#222" /></>) },
  { name: "Look at", w: 39, art: (<><path d="M2 9L9 3v3l6-4v4h6v3" fill="#aab0bc" stroke="#4d515c" strokeWidth="1.300" /><rect x="1" y="9" width="22" height="14" fill="#f3f4f6" stroke="#4d515c" strokeWidth="1.600" /><rect x="6" y="13" width="12" height="6" fill="#b9bdc7" stroke="#4d515c" strokeWidth="1.400" /></>) },
  { name: "Pan", w: 39, art: (<path d="M8 22Q6 17 1.500 13.500q-1-2 1.500-1.500l4 3L4 5q1-2 2.500 0L9 11 8.500 2.500q1.500-2 3 0L12 10l1.500-8q2-1.500 2.500.5L15.500 11 20 4.500q2-.5 2 1.500L19.500 16q-1 4-3 6v1.500H8z" fill="#fff" stroke="#4d515c" strokeWidth="1.400" />) },
  { name: "Zoom", w: 39, art: (<><path d="M12 14l7 7" stroke="#333" strokeWidth="4" strokeLinecap="round" /><circle cx="8.500" cy="10" r="6.500" fill="#dfedf0" stroke="#5a626c" strokeWidth="1.700" /><path d="M17 4.500h7M20.500 1v7M17 11h7" stroke="#333" strokeWidth="1.500" /></>) },
  { name: "Fit", w: 61, gap: 8, art: (<><rect x="1" y="1" width="22" height="22" fill="none" stroke="#444" strokeWidth="1.400" strokeDasharray="3 3" /><path d="M17 17l5 5" stroke="#333" strokeWidth="4" strokeLinecap="round" /><circle cx="11.500" cy="10.500" r="9" fill="#dfedea" stroke="#5a626c" strokeWidth="1.700" /></>) },
  { name: "Display settings", w: 47, gap: 4, art: (<><rect x="1" y="1" width="22" height="17" fill="#eef0f3" stroke="#4d515c" strokeWidth="1.600" /><rect x="4" y="4" width="16" height="11" fill="#9dc0ea" stroke="#3b5c8d" strokeWidth="1.400" /><path d="M9 18h6v3h3v2H6v-2h3z" fill="#d7dae0" stroke="#4d515c" /></>) },
  { name: "Grid", w: 46, gap: 4, art: (<><rect x="1" y="1" width="22" height="22" fill="#fafafa" stroke="#4d515c" strokeWidth="1.600" /><path d="M5.500 1v22M10 1v22M14.500 1v22M19 1v22M1 5.500h22M1 10h22M1 14.500h22M1 19h22" stroke="#5c616c" strokeWidth="1.200" /></>) },
  { name: "Viewports", w: 46, gap: 4, art: (<g fill="#a6c3e8" stroke="#44618f" strokeWidth="1.400"><path d="M1 2h10.500v9H1zM12.500 2H23v9H12.500zM1 12.500h10.500v9H1zM12.500 12.500H23v9H12.500z" /><path d="M4 5h4.500v3H4zM15.500 5H20v3h-4.500zM4 15.500h4.500v3H4zM15.500 15.500H20v3h-4.500z" fill="#c8dbf3" strokeWidth="0.800" /></g>) },
];

export default function App() {
  return (
    <Page>
      <Global />
      <Defs />
      <TitleBar>
        <svg width="24" height="24" viewBox="0 0 24 24"><path d="M0 0h24v24H0z" fill="#fce6d3" /><path d="M7 3l3-1h8v4h-6v3h5v4h-5v6H7z" fill="#c8751f" /><path d="M7 3l3-.5V19H7z" fill="#8f4e14" /><path d="M13 20h8v2h-8z" fill="#f2b17c" /></svg>
        <TitleText>Autodesk Fusion 360 (Education License)</TitleText>
        <WindowButton aria-label="Minimize"><svg width="16" height="16"><path d="M0 8.500h16" stroke="#000" /></svg></WindowButton>
        <WindowButton aria-label="Restore"><svg width="16" height="16"><path d="M.5 3.500h11v12H.5zM3.500 3.500v-3h12v11h-3.500" fill="none" stroke="#000" /></svg></WindowButton>
        <WindowButton aria-label="Close"><svg width="16" height="16"><path d="M.5.5l15 15M15.500.5l-15 15" stroke="#000" strokeWidth="1.200" /></svg></WindowButton>
      </TitleBar>

      <TabStrip>
        <DocTab>
          <PartIcon width="26" height="26" viewBox="0 0 26 26"><path d="M1 4L13 0l12 4v13l-12 8L1 17z" fill="#6c6c6c" /><path d="M2 5l11 3v15L2 16z" fill="#adadad" /><path d="M2 4l11-3 11 3-11 3z" fill="#575757" /></PartIcon>
          <TabName>owl head...overed)*</TabName>
          <SyncRing />
          <button aria-label="Close tab"><svg width="15" height="15" viewBox="0 0 15 15"><path d="M2 2l11 11M13 2L2 13" stroke="#8e8e8e" strokeWidth="4" /></svg></button>
        </DocTab>
        <NewTab aria-label="New tab"><svg width="17" height="17"><path d="M8.500 0v17M0 8.500h17" stroke="#8b96a3" strokeWidth="2.500" /></svg></NewTab>
      </TabStrip>

      <QuickBar>
        <QuickGroup $gap={36}>
          <QuickButton aria-label="Data panel"><svg width="26" height="26" viewBox="0 0 26 26"><path d="M0 0h8v8H0zM9 0h8v8H9zM18 0h8v8h-8zM0 9h8v8H0zM9 9h8v8H9zM18 9h8v8h-8zM0 18h8v8H0zM9 18h8v8H9zM18 18h8v8h-8z" fill="#4d4d4d" /></svg></QuickButton>
          <QuickButton aria-label="File"><svg width="21" height="24" viewBox="0 0 21 24"><path d="M0 0h12v9h9v15H0zM14 0l7 7h-7z" fill="#4d4d4d" /></svg><Caret /></QuickButton>
          <QuickButton aria-label="Save"><svg width="25" height="24" viewBox="0 0 25 24"><path d="M0 0h25v24H4l-4-4z" fill="#4d4d4d" /><path d="M4 1.500h17v9.500H4zM7 15h12v9H7z" fill="#f1f1f1" /><path d="M8 16h10v6H8z" fill="#4d4d4d" /><path d="M9 17h2v4H9z" fill="#f1f1f1" /></svg></QuickButton>
          <QuickGroup $gap={23}>
            <QuickButton aria-label="Undo"><svg width="26" height="18" viewBox="0 0 26 18"><path d="M0 7.500L11 0v4.500q13 0 14 13Q21 11 11 11v4z" fill="#4d4d4d" /></svg><Caret /></QuickButton>
            <QuickButton aria-label="Redo" $faded><svg width="26" height="18" viewBox="0 0 26 18"><path d="M26 7.500L15 0v4.500Q2 4.500 1 17.500 5 11 15 11v4z" fill="#4d4d4d" /></svg><Caret /></QuickButton>
          </QuickGroup>
        </QuickGroup>
        <QuickGroup $gap={36}>
          <QuickButton aria-label="Comments"><svg width="25" height="22" viewBox="0 0 25 22"><path d="M0 0h25v17h-3v5l-5-5H0z" fill="#4d4d4d" /><path d="M3 4h19M3 8h19M3 12h12" stroke="#f1f1f1" strokeWidth="1.500" /></svg></QuickButton>
          <QuickButton aria-label="Job status"><svg width="25" height="25" viewBox="0 0 25 25"><circle cx="12.500" cy="12.500" r="11" fill="none" stroke="#4d4d4d" strokeWidth="2.500" /><path d="M12.500 6v7.500h6.500" fill="none" stroke="#4d4d4d" strokeWidth="3" /></svg></QuickButton>
          <AccountButton>Joel Alex<Caret /></AccountButton>
          <HelpButton aria-label="Help"><svg width="25" height="25" viewBox="0 0 25 25"><circle cx="12.500" cy="12.500" r="12.500" fill="#686868" /><path d="M8.500 9.500q0-4 4-4t4 3.500q0 2-2 3t-2 3.500" fill="none" stroke="#f1f1f1" strokeWidth="2.800" /><path d="M11 17.500h3v3h-3z" fill="#f1f1f1" /></svg><Caret /></HelpButton>
        </QuickGroup>
      </QuickBar>

      <Viewport>
        <Ribbon>
          <Grip />
          <ModelButton>MODEL<Caret /></ModelButton>
          {groups.map((g) => (
            <RibbonGroup key={g.label} $w={g.w}>
              <Tools>{g.tools.map((t) => (<Tool key={t} aria-label={t} $active={t === "select"}><ToolIcon name={t} /></Tool>))}</Tools>
              <GroupLabel>{g.label}<Caret /></GroupLabel>
            </RibbonGroup>
          ))}
        </Ribbon>
        <CubeSlot><ViewCube /></CubeSlot>

        <Workspace>
          <SideColumn>
            <PanelHead>
              <CollapseButton aria-label="Collapse browser"><svg width="16" height="12" viewBox="0 0 16 12"><path d="M8 1v10L0 6zM16 1v10L8 6z" fill="#333" /></svg></CollapseButton>
              <PanelTitle>BROWSER</PanelTitle>
              <button aria-label="Minimize browser"><svg width="14" height="14" viewBox="0 0 14 14"><circle cx="7" cy="7" r="7" fill="#333" /><path d="M3 7h8" stroke="#f1f1f1" strokeWidth="1.800" /></svg></button>
              <SlimGrip />
            </PanelHead>
            <Tree>
              <Row>
                <svg width="19" height="19" viewBox="0 0 19 19"><path d="M18 1v17H1z" fill="url(#corner)" stroke="#333" strokeWidth="1.600" /></svg>
                <RootBody>
                  <Bulb />
                  <RootName>
                    <svg width="26" height="24" viewBox="0 0 26 24"><path d="M1.500 6L6 1.500h18V18l-5 4.500H1.500z" fill="#fff" stroke="#55595f" strokeWidth="1.600" /><path d="M19 6l5-4.500V18l-5 4.500z" fill="#c5c8ce" /></svg>
                    owl head (v11~recovered)
                  </RootName>
                  <svg width="20" height="20" viewBox="0 0 20 20"><circle cx="10" cy="10" r="9" fill="#fff" stroke="#3d3d3d" strokeWidth="1.600" /><circle cx="10" cy="10" r="3.800" fill="#333" /></svg>
                </RootBody>
              </Row>
              {nodes.map((n) => (
                <Row key={n.name} $child>
                  <Expander />
                  <RowBody>
                    {n.bulb && <BulbSlot><Bulb /></BulbSlot>}
                    {n.kind === "gear" ? <Gear size={24} /> : <Folder />}
                    <RowName>{n.name}</RowName>
                  </RowBody>
                </Row>
              ))}
            </Tree>
            <Spacer />
            <PanelHead>
              <CollapseButton as="span" />
              <PanelTitle>COMMENTS</PanelTitle>
              <button aria-label="Expand comments"><svg width="14" height="14" viewBox="0 0 14 14"><circle cx="7" cy="7" r="7" fill="#333" /><path d="M3 7h8M7 3v8" stroke="#f1f1f1" strokeWidth="1.800" /></svg></button>
              <SlimGrip />
            </PanelHead>
          </SideColumn>
          <Scene><OwlModel /></Scene>
        </Workspace>

        <NavBar>
          {navTools.map((t) => (
            <NavButton key={t.name} aria-label={t.name} $w={t.w} $gap={t.gap ?? 0}>
              <svg width="24" height="24" viewBox="0 0 24 24">{t.art}</svg>{t.gap && <Caret />}
            </NavButton>
          ))}
        </NavBar>
      </Viewport>

      <Timeline>
        <ScrollThumb />
        <TimelineBody>
          <Playback>
            {playback.map(([name, d]) => (
              <PlayButton key={name} aria-label={name}><svg width="22" height="23" viewBox="0 0 22 23"><path d={d} fill="#484848" /></svg></PlayButton>
            ))}
          </Playback>
          <Track>
            <Cells>
              {features.map((f, i) => (
                <Cell key={i} $faded={i >= markerAt}>
                  <svg width="25" height="25" viewBox="0 0 24 24">{featureArt[f]}</svg>
                  {i === markerAt && <Marker width="18" height="49" viewBox="0 0 18 49"><path d="M0 0h18v8l-7 8v33H7.500V16L0 8z" fill="#5e5e5e" /></Marker>}
                </Cell>
              ))}
            </Cells>
            <Rail />
          </Track>
          <GearButton aria-label="Timeline settings"><Gear size={24} /></GearButton>
        </TimelineBody>
      </Timeline>

      <Taskbar>
        <Start aria-label="Start"><svg width="24" height="24" viewBox="0 0 24 24"><path d="M0 3.500L10 2v9.500H0zM11 2l13-2v11.500H11zM0 12.500h10V22L0 20.500zM11 12.500h13V24l-13-2z" fill="#fff" /></svg></Start>
        <SearchBox>
          <svg width="34" height="34" viewBox="0 0 34 34"><circle cx="17" cy="17" r="14.500" fill="#fff" stroke="#000" strokeWidth="4" /></svg>
          <SearchInput aria-label="Search" placeholder="Type here to search" />
          <svg width="18" height="24" viewBox="0 0 18 24"><rect x="5" y="1" width="8" height="15" rx="2" fill="none" stroke="#222" strokeWidth="1.600" /><path d="M1.500 10v6q0 3 3 3h9q3 0 3-3v-6M9 19v4M5 23h8" fill="none" stroke="#222" strokeWidth="1.600" /></svg>
        </SearchBox>
        <Apps>
          {apps.map((a) => (<AppButton key={a.name} aria-label={a.name} $run={a.run} $on={a.on}>{a.icon}</AppButton>))}
        </Apps>
        <Tray>
          <TrayButton $w={66} aria-label="People"><svg width="24" height="26" viewBox="0 0 24 26"><g fill="none" stroke="#fff" strokeWidth="1.600"><circle cx="16" cy="5" r="4" /><path d="M11 13q4-6 9-2 2 2 2 6" /><circle cx="8" cy="14" r="3.500" /><path d="M2 25q0-7 6-7t6 7" /></g></svg></TrayButton>
          <TrayButton $w={38} aria-label="Show hidden icons"><svg width="18" height="12"><path d="M1 11l8-9 8 9" fill="none" stroke="#fff" strokeWidth="1.500" /></svg></TrayButton>
          <TrayButton $w={36} aria-label="Battery"><svg width="26" height="20" viewBox="0 0 26 20"><path d="M9 7h13v8.500H7V11z" fill="#fff" /><path d="M8 4.500h15.500v13.500H5V12M25 9v5" fill="none" stroke="#fff" strokeWidth="1.300" /><path d="M1 3h6v4q0 2-3 2T1 7zM2.500 0v3M5.500 0v3M4 9v8" fill="#050b14" stroke="#fff" strokeWidth="1.300" /></svg></TrayButton>
          <TrayButton $w={36} aria-label="Volume"><svg width="24" height="20" viewBox="0 0 24 20"><path d="M1 7h4l6-6v18l-6-6H1zM14 7q2 3 0 6M17 4q4 6 0 12M20 2q5 8 0 16" fill="none" stroke="#fff" strokeWidth="1.400" /></svg></TrayButton>
          <TrayButton $w={38} aria-label="Network"><svg width="20" height="20" viewBox="0 0 20 20"><path d="M1 19Q1 2 19 1M6 19Q6 7 19 6M11 19q0-7 8-8" fill="none" stroke="#ddd" strokeWidth="1.500" /><circle cx="17" cy="17" r="2" fill="#fff" /></svg></TrayButton>
          <TrayButton $w={49} aria-label="Language">ENG</TrayButton>
          <Clock>19:27<br />26-02-2019</Clock>
          <TrayButton $w={60} aria-label="Notifications">
            <svg width="36" height="44" viewBox="0 -5 36 44"><path d="M1 0h24v19H12v6l-6-6H1z" fill="#fff" /><path d="M6 5h14M6 9.500h14M6 14h9" stroke="#050b14" strokeWidth="1.500" /><circle cx="23" cy="25" r="12" fill="#2a2d33" stroke="#8b8e93" strokeWidth="1.500" /><Badge x="18" y="31" fill="#fff">4</Badge></svg>
          </TrayButton>
          <Desktop aria-label="Show desktop" />
        </Tray>
      </Taskbar>
    </Page>
  );
}
